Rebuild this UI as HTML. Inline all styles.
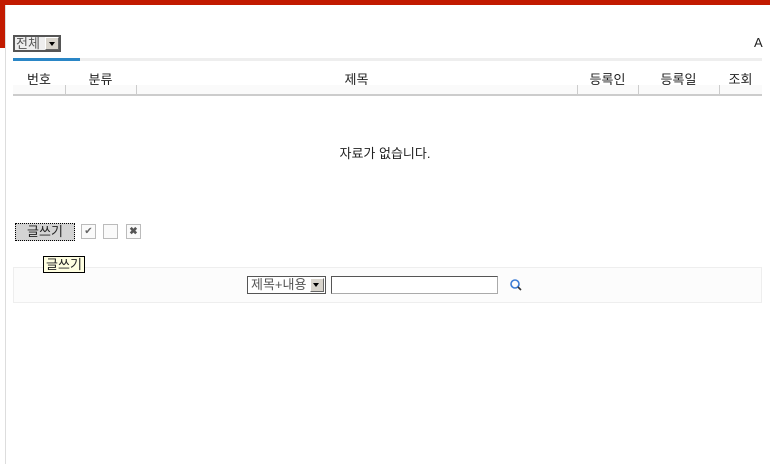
<!DOCTYPE html>
<html><head><meta charset="utf-8"><style>
body{margin:0;width:770px;height:464px;overflow:hidden;background:#fff;font-family:"Liberation Sans","Noto Sans CJK KR","NanumGothic",sans-serif;font-size:12px;color:#222;position:relative}
.a{position:absolute}
</style></head><body>
<div class="a" style="left:0;top:0;width:770px;height:5px;background:#c21a00"></div>
<div class="a" style="left:0;top:0;width:5px;height:48px;background:#c21a00"></div>
<div class="a" style="left:5px;top:5px;width:1px;height:459px;background:#ddd"></div>
<div class="a" style="left:13px;top:35px;width:48px;height:17px;border:2px solid #555;box-sizing:border-box;background:#eee"></div>
<div class="a" style="left:16px;top:35px;font-size:13px;color:#555;line-height:17px">전체</div>
<div class="a" style="left:45px;top:37px;width:14px;height:13px;background:#d8d4cc;border:1px solid #fff;border-right-color:#666;border-bottom-color:#666;box-sizing:border-box"></div>
<div class="a" style="left:49px;top:42px;width:0;height:0;border:3.5px solid transparent;border-top:4px solid #000;border-bottom:0"></div>
<div class="a" style="left:754px;top:35px;font-size:13px">A</div>
<div class="a" style="left:13px;top:58px;width:749px;height:3px;background:#eee"></div>
<div class="a" style="left:13px;top:58px;width:67px;height:3px;background:#2a86c6"></div>
<div class="a" style="left:13px;top:69px;width:52px;text-align:center;font-size:13px">번호</div>
<div class="a" style="left:65px;top:69px;width:71px;text-align:center;font-size:13px">분류</div>
<div class="a" style="left:136px;top:69px;width:441px;text-align:center;font-size:13px">제목</div>
<div class="a" style="left:577px;top:69px;width:61px;text-align:center;font-size:13px">등록인</div>
<div class="a" style="left:638px;top:69px;width:81px;text-align:center;font-size:13px">등록일</div>
<div class="a" style="left:719px;top:69px;width:43px;text-align:center;font-size:13px">조회</div>
<div class="a" style="left:13px;top:85px;width:749px;height:9px;background:#fafafa"></div>
<div class="a" style="left:65px;top:85px;width:1px;height:10px;background:#ccc"></div>
<div class="a" style="left:136px;top:85px;width:1px;height:10px;background:#ccc"></div>
<div class="a" style="left:577px;top:85px;width:1px;height:10px;background:#ccc"></div>
<div class="a" style="left:638px;top:85px;width:1px;height:10px;background:#ccc"></div>
<div class="a" style="left:719px;top:85px;width:1px;height:10px;background:#ccc"></div>
<div class="a" style="left:13px;top:94px;width:749px;height:2px;background:#ccc"></div>
<div class="a" style="left:0;top:143px;width:770px;text-align:center;font-size:13px">자료가 없습니다.</div>
<div class="a" style="left:15px;top:223px;width:60px;height:18px;background:#d4d4d4;border:1px dotted #000;box-sizing:border-box;text-align:center;line-height:16px;font-size:13px">글쓰기</div>
<div class="a" style="left:81px;top:224px;width:15px;height:15px;border:1px solid #bbb;box-sizing:border-box;background:#fafafa;font-size:10px;line-height:13px;text-align:center;color:#666">✔</div>
<div class="a" style="left:103px;top:224px;width:15px;height:15px;border:1px solid #bbb;box-sizing:border-box;background:#fafafa"></div>
<div class="a" style="left:126px;top:224px;width:15px;height:15px;border:1px solid #bbb;box-sizing:border-box;background:#fafafa;font-size:10px;line-height:13px;text-align:center;color:#555">✖</div>
<div class="a" style="left:13px;top:267px;width:749px;height:36px;background:#fcfcfc;border:1px solid #eee;box-sizing:border-box"></div>
<div class="a" style="left:43px;top:256px;width:42px;height:17px;background:#ffffe1;border:1px solid #000;box-sizing:border-box;text-align:center;line-height:15px;font-size:13px">글쓰기</div>
<div class="a" style="left:247px;top:276px;width:79px;height:18px;border:1px solid #555;box-sizing:border-box;background:#fff"></div>
<div class="a" style="left:251px;top:276px;font-size:13px;color:#555;line-height:17px">제목+내용</div>
<div class="a" style="left:310px;top:278px;width:14px;height:14px;background:#d8d4cc;border:1px solid #fff;border-right-color:#666;border-bottom-color:#666;box-sizing:border-box"></div>
<div class="a" style="left:313px;top:283px;width:0;height:0;border:3.5px solid transparent;border-top:4px solid #000;border-bottom:0"></div>
<div class="a" style="left:331px;top:276px;width:167px;height:18px;border:1px solid #aaa;border-top-color:#555;border-left-color:#555;box-sizing:border-box;background:#fff"></div>
<svg class="a" style="left:509px;top:278px" width="14" height="14"><circle cx="6" cy="6" r="4" fill="none" stroke="#3a7bd5" stroke-width="1.6"/><line x1="9" y1="9" x2="12" y2="12" stroke="#333" stroke-width="1.6"/></svg>
</body></html>
